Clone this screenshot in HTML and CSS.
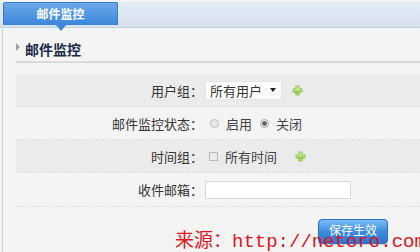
FILE: index.html
```html
<!DOCTYPE html>
<html lang="zh-CN">
<head>
<meta charset="utf-8">
<title>邮件监控</title>
<link rel="stylesheet" href="styles.css">
</head>
<body>
<div class="topbar">
  <div class="tab">邮件监控<span class="tab-pointer"></span></div>
</div>
<div class="page">
  <div class="section-head">
    <span class="arrow"></span>
    <h2 class="section-title">邮件监控</h2>
  </div>
  <div class="form">
    <div class="row row-dark">
      <label class="label">用户组：</label>
      <div class="field">
        <div class="select"><span>所有用户</span><span class="caret"></span></div>
        <svg class="plus" width="13" height="13" viewBox="0 0 13 13"><path d="M5 1.5h3a0.8 0.8 0 0 1 .8.8V4.2h1.9a0.8 0.8 0 0 1 .8.8v3a0.8 0.8 0 0 1-.8.8H8.8v1.9a0.8 0.8 0 0 1-.8.8H5a0.8 0.8 0 0 1-.8-.8V8.8H2.3a0.8 0.8 0 0 1-.8-.8V5a0.8 0.8 0 0 1 .8-.8h1.9V2.3a0.8 0.8 0 0 1 .8-.8z" fill="#9ccc5e"/><path d="M5.2 2.5h2.6v2.7h2.7v1.2H2.5V5.2h2.7z" fill="#c3e39a"/></svg>
      </div>
    </div>
    <div class="row">
      <label class="label">邮件监控状态：</label>
      <div class="field">
        <span class="radio"></span><span class="opt">启用</span>
        <span class="radio checked"></span><span class="opt">关闭</span>
      </div>
    </div>
    <div class="row row-dark">
      <label class="label">时间组：</label>
      <div class="field">
        <span class="checkbox"></span><span class="opt">所有时间</span>
        <svg class="plus plus-time" width="13" height="13" viewBox="0 0 13 13"><path d="M5 1.5h3a0.8 0.8 0 0 1 .8.8V4.2h1.9a0.8 0.8 0 0 1 .8.8v3a0.8 0.8 0 0 1-.8.8H8.8v1.9a0.8 0.8 0 0 1-.8.8H5a0.8 0.8 0 0 1-.8-.8V8.8H2.3a0.8 0.8 0 0 1-.8-.8V5a0.8 0.8 0 0 1 .8-.8h1.9V2.3a0.8 0.8 0 0 1 .8-.8z" fill="#9ccc5e"/><path d="M5.2 2.5h2.6v2.7h2.7v1.2H2.5V5.2h2.7z" fill="#c3e39a"/></svg>
      </div>
    </div>
    <div class="row row-last">
      <label class="label">收件邮箱：</label>
      <div class="field">
        <span class="input"></span>
      </div>
    </div>
    <div class="actions">
      <button class="btn">保存生效</button>
    </div>
  </div>
</div>
<div class="watermark">来源：http://netoro.com</div>
</body>
</html>
```
FILE: styles.css
```css
html, body {
  margin: 0;
  padding: 0;
}
body {
  width: 420px;
  height: 252px;
  overflow: hidden;
  background: #f4f4f4;
  font-family: "Noto Sans CJK SC", "Noto Sans", sans-serif;
  font-size: 13px;
  color: #333;
  position: relative;
}
.topbar {
  height: 26px;
  background: linear-gradient(#e3ecf6, #d6e2ef);
  border-bottom: 1px solid #c4d3e3;
  padding-left: 3px;
  box-sizing: border-box;
}
.tab {
  position: relative;
  width: 115px;
  height: 23px;
  margin-top: 2px;
  background: linear-gradient(#6aa9ea, #3c86da);
  border: 1px solid #3a7cc8;
  border-bottom: none;
  box-sizing: border-box;
  border-radius: 2px 2px 0 0;
  color: #fff;
  font-weight: bold;
  font-size: 12px;
  text-align: center;
  line-height: 22px;
}
.tab-pointer {
  position: absolute;
  left: 52px;
  top: 22px;
  width: 0;
  height: 0;
  border-left: 5px solid transparent;
  border-right: 5px solid transparent;
  border-top: 6px solid #3c86da;
}
.page {
  margin-left: 2px;
  border-left: 1px solid #c6d2e0;
  height: 226px;
}
.section-head {
  display: flex;
  align-items: center;
  margin-left: 13px;
  height: 35px;
  padding-top: 9px;
  box-sizing: border-box;
  border-bottom: 2px solid #dadada;
}
.arrow {
  width: 0;
  height: 0;
  border-top: 4px solid transparent;
  border-bottom: 4px solid transparent;
  border-left: 4px solid #9aa3ad;
  margin-right: 5px;
  margin-top: -4px;
}
.section-title {
  margin: 0;
  font-size: 14px;
  font-weight: bold;
  color: #1c2c4a;
}
.form {
  margin-left: 13px;
  margin-top: 11px;
}
.row {
  display: grid;
  grid-template-columns: 187px 1fr;
  align-items: center;
  height: 33px;
  border-bottom: 1px dashed #dedede;
  box-sizing: border-box;
}
.row-dark {
  background: #ebebeb;
}
.row-last {
  height: 34px;
}
.label {
  text-align: right;
  color: #333;
}
.field {
  display: flex;
  align-items: center;
  padding-left: 2px;
}
.select {
  width: 77px;
  height: 19px;
  background: #fff;
  border: 1px solid #e6e6e6;
  box-sizing: border-box;
  display: flex;
  align-items: center;
  justify-content: space-between;
  padding: 0 5px 0 4px;
  line-height: 17px;
}
.caret {
  width: 0;
  height: 0;
  border-left: 3px solid transparent;
  border-right: 3px solid transparent;
  border-top: 4px solid #222;
}
.plus {
  margin-left: 9px;
}
.plus-time {
  margin-left: 17px;
}
.radio {
  width: 7px;
  height: 7px;
  border-radius: 50%;
  border: 1px solid #bdbdbd;
  background: #e9e9e9;
  margin: 0 7px 0 5px;
  box-sizing: content-box;
}
.radio.checked {
  background: radial-gradient(circle, #5a6472 0 2px, #eaeaea 2.5px);
  border-color: #a9a9a9;
  margin-left: 8px;
}
.opt {
  color: #444;
}
.checkbox {
  width: 7px;
  height: 7px;
  border: 1px solid #b9b9b9;
  background: #ececec;
  margin: 0 7px 0 4px;
}
.input {
  width: 146px;
  height: 18px;
  background: #fff;
  border: 1px solid #d8d8d8;
  box-sizing: border-box;
}
.actions {
  display: flex;
  justify-content: flex-end;
  padding: 12px 32px 0 0;
}
.btn {
  width: 70px;
  height: 25px;
  border: 1px solid #2f70bf;
  border-radius: 4px;
  background: linear-gradient(#7cbcf3, #3d8de0 50%, #2a75d2);
  color: #fff;
  font-family: "Noto Sans CJK SC", sans-serif;
  font-size: 12px;
  line-height: 19px;
  padding: 0 0 4px;
  box-shadow: 0 1px 1px rgba(0,0,0,0.15);
}
.watermark {
  position: absolute;
  left: 175px;
  top: 230px;
  font-family: "Liberation Mono", "Noto Sans CJK SC", monospace;
  font-size: 19px;
  line-height: 24px;
  color: #e0141c;
  white-space: nowrap;
}
```
